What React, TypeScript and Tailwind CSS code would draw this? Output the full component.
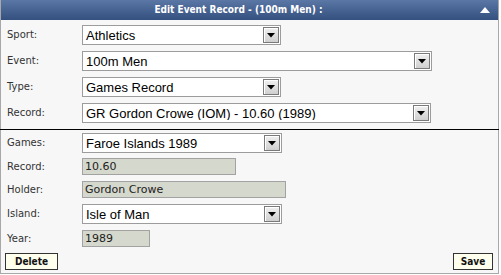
import React from 'react';

const Arrow = () => (
  <div className="w-[16px] h-[16px] m-[1px] shrink-0 flex items-center justify-center border border-[#7a7a7a] bg-gradient-to-b from-[#f0f0f0] to-[#cfcfcf] shadow-[inset_1px_1px_0_#ffffff]">
    <svg width="8" height="5" viewBox="0 0 8 5">
      <path d="M0 0 L8 0 L4 4.5 Z" fill="#000" />
    </svg>
  </div>
);

const Select = ({ value, width }: { value: string; width: string }) => (
  <div className={`${width} h-[20px] flex items-center bg-white border border-[#9c9c9c]`}>
    <span className="flex-1 pl-[3px] text-[13px] leading-none text-black font-['Liberation_Sans',Arial,sans-serif] whitespace-nowrap overflow-hidden">
      {value}
    </span>
    <Arrow />
  </div>
);

const ReadOnly = ({ value, width }: { value: string; width: string }) => (
  <div className={`${width} h-[17px] flex items-center bg-[#d5d8cc] border border-[#a2a2a2] pl-[2px] text-[11px] leading-none text-[#222]`}>
    {value}
  </div>
);

const Row = ({ label, children, className = '' }: { label: string; children: React.ReactNode; className?: string }) => (
  <div className={`flex items-center ${className}`}>
    <div className="w-[75px] shrink-0 text-[10px] leading-none text-[#333]">{label}</div>
    {children}
  </div>
);

export default function App() {
  return (
    <div className="w-[499px] h-[274px] bg-[#f7f7f7] border border-t-0 border-[#a8a8a8] flex flex-col font-['DejaVu_Sans',Verdana,sans-serif]">
      {/* header */}
      <div className="h-[20px] shrink-0 flex items-center bg-gradient-to-b from-[#5b77a6] to-[#34507f]">
        <div className="flex-1 text-center text-white text-[10px] font-bold leading-none font-['DejaVu_Sans_Condensed','DejaVu_Sans',sans-serif] [font-stretch:condensed]">
          Edit Event Record - (100m Men) :
        </div>
        <div className="w-[18px] mr-[4px] flex items-center justify-center">
          <svg width="10" height="6" viewBox="0 0 10 6">
            <path d="M0 6 L5 0 L10 6 Z" fill="#fff" />
          </svg>
        </div>
      </div>

      <div className="flex flex-col gap-[6px] pt-[5px] pb-[6px] pl-[6px]">
        <Row label="Sport:"><Select value="Athletics" width="w-[199px]" /></Row>
        <Row label="Event:"><Select value="100m Men" width="w-[350px]" /></Row>
        <Row label="Type:"><Select value="Games Record" width="w-[199px]" /></Row>
        <Row label="Record:"><Select value="GR Gordon Crowe (IOM) - 10.60 (1989)" width="w-[349px]" /></Row>
      </div>

      <div className="h-[1px] bg-black -ml-[1px] -mr-[1px]" />

      <div className="flex flex-col pt-[3px] pl-[6px]">
        <Row label="Games:"><Select value="Faroe Islands 1989" width="w-[200px]" /></Row>
        <Row label="Record:" className="mt-[5px]"><ReadOnly value="10.60" width="w-[154px]" /></Row>
        <Row label="Holder:" className="mt-[6px]"><ReadOnly value="Gordon Crowe" width="w-[204px]" /></Row>
        <Row label="Island:" className="mt-[6px]"><Select value="Isle of Man" width="w-[200px]" /></Row>
        <Row label="Year:" className="mt-[6px]"><ReadOnly value="1989" width="w-[68px]" /></Row>
      </div>

      <div className="flex justify-between mt-[6px] pl-[4px] pr-[5px]">
        <button className="w-[53px] h-[17px] flex items-center justify-center bg-[#ffffee] border border-[#333] text-[10px] font-bold leading-none text-[#111] font-['DejaVu_Sans_Condensed','DejaVu_Sans',sans-serif] [font-stretch:condensed]">
          Delete
        </button>
        <button className="w-[40px] h-[17px] flex items-center justify-center bg-[#ffffee] border border-[#333] text-[10px] font-bold leading-none text-[#111] font-['DejaVu_Sans_Condensed','DejaVu_Sans',sans-serif] [font-stretch:condensed]">
          Save
        </button>
      </div>
    </div>
  );
}
